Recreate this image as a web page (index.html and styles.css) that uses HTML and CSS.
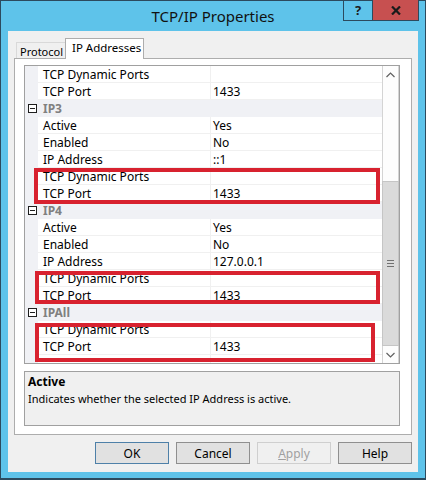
FILE: index.html
```html
<!DOCTYPE html>
<html>
<head>
<meta charset="utf-8">
<link rel="stylesheet" href="styles.css">
</head>
<body>
<div class="window">
  <div class="titlebar"><span class="title">TCP/IP Properties</span></div>
  <div class="caption">
    <div class="cap-help">?</div>
    <div class="cap-close">
      <svg width="10" height="9" viewBox="0 0 10 9"><path d="M1 0.5 L9 8.5 M9 0.5 L1 8.5" stroke="#1b1b1b" stroke-width="2.2" fill="none"/></svg>
    </div>
  </div>
  <div class="client">
    <div class="tabs">
      <div class="tab tab-off">Protocol</div>
      <div class="tab tab-on">IP Addresses</div>
    </div>
    <div class="panel">
      <div class="grid">
        <div class="rows">
          <div class="row"><div class="gut"></div><div class="name">TCP Dynamic Ports</div><div class="val"></div></div>
          <div class="row"><div class="gut"></div><div class="name">TCP Port</div><div class="val">1433</div></div>
          <div class="row cat"><div class="gut"><span class="minus"></span></div><div class="catname">IP3</div></div>
          <div class="row"><div class="gut"></div><div class="name">Active</div><div class="val">Yes</div></div>
          <div class="row"><div class="gut"></div><div class="name">Enabled</div><div class="val">No</div></div>
          <div class="row"><div class="gut"></div><div class="name">IP Address</div><div class="val">::1</div></div>
          <div class="row"><div class="gut"></div><div class="name">TCP Dynamic Ports</div><div class="val"></div></div>
          <div class="row"><div class="gut"></div><div class="name">TCP Port</div><div class="val">1433</div></div>
          <div class="row cat"><div class="gut"><span class="minus"></span></div><div class="catname">IP4</div></div>
          <div class="row"><div class="gut"></div><div class="name">Active</div><div class="val">Yes</div></div>
          <div class="row"><div class="gut"></div><div class="name">Enabled</div><div class="val">No</div></div>
          <div class="row"><div class="gut"></div><div class="name">IP Address</div><div class="val">127.0.0.1</div></div>
          <div class="row"><div class="gut"></div><div class="name">TCP Dynamic Ports</div><div class="val"></div></div>
          <div class="row"><div class="gut"></div><div class="name">TCP Port</div><div class="val">1433</div></div>
          <div class="row cat"><div class="gut"><span class="minus"></span></div><div class="catname">IPAll</div></div>
          <div class="row"><div class="gut"></div><div class="name">TCP Dynamic Ports</div><div class="val"></div></div>
          <div class="row"><div class="gut"></div><div class="name">TCP Port</div><div class="val">1433</div></div>
          <div class="row last"><div class="gut"></div><div class="name blank"></div><div class="val blank"></div></div>
        </div>
        <div class="vscroll">
          <div class="sbtn"><svg width="9" height="6" viewBox="0 0 9 6"><path d="M0.5 5 L4.5 1 L8.5 5" stroke="#606060" stroke-width="1.2" fill="none"/></svg></div>
          <div class="track-top"></div>
          <div class="thumb"><span class="grip"></span></div>
          <div class="sbtn"><svg width="9" height="6" viewBox="0 0 9 6"><path d="M0.5 1 L4.5 5 L8.5 1" stroke="#606060" stroke-width="1.2" fill="none"/></svg></div>
        </div>
      </div>
      <div class="desc">
        <div class="desc-title">Active</div>
        <div class="desc-text">Indicates whether the selected IP Address is active.</div>
      </div>
    </div>
    <div class="buttons">
      <div class="btn btn-default">OK</div>
      <div class="btn">Cancel</div>
      <div class="btn btn-disabled"><u>A</u>pply</div>
      <div class="btn">Help</div>
    </div>
  </div>
  <div class="mark mark1"></div>
  <div class="mark mark2"></div>
  <div class="mark mark3"></div>
</div>
</body>
</html>
```

FILE: styles.css
```css
html, body {
  margin: 0;
  padding: 0;
}
body {
  width: 426px;
  height: 480px;
  overflow: hidden;
  font-family: "Noto Sans", "Open Sans", sans-serif;
  font-size: 12px;
  color: #000;
}
.window {
  position: relative;
  box-sizing: border-box;
  width: 426px;
  height: 480px;
  background: #5ec3ea;
  border: 1px solid #2c4a5e;
  border-bottom-width: 2px;
  padding: 0 7px 6px 7px;
  display: flex;
  flex-direction: column;
}
.titlebar {
  height: 30px;
  display: flex;
  align-items: center;
  justify-content: center;
}
.title {
  font-size: 15px;
  color: #111;
  margin-top: -1px;
}
.caption {
  position: absolute;
  top: -1px;
  right: 6px;
  display: flex;
  border: 1px solid #2c4a5e;
  border-top: none;
}
.cap-help {
  width: 28px;
  height: 20px;
  border-right: 1px solid #2c4a5e;
  display: flex;
  align-items: center;
  justify-content: center;
  font-weight: bold;
  font-size: 13px;
  color: #1b1b1b;
}
.cap-close {
  width: 45px;
  height: 20px;
  background: #c75050;
  display: flex;
  align-items: center;
  justify-content: center;
}
.client {
  flex: 1;
  background: #f0f0f0;
  padding: 7px 6px 0 6px;
  display: flex;
  flex-direction: column;
}
.tabs {
  display: flex;
  align-items: flex-end;
  padding-left: 2px;
  height: 20px;
}
.tab {
  box-sizing: border-box;
  display: flex;
  align-items: center;
  white-space: nowrap;
  font-size: 11.5px;
}
.tab-off {
  height: 16px;
  width: 49px;
  border: 1px solid #d9d9d9;
  border-bottom: none;
  border-right: none;
  background: #f0f0f0;
  padding-left: 3px;
  padding-top: 1px;
  font-size: 11px;
}
.tab-on {
  position: relative;
  z-index: 1;
  height: 21px;
  width: 79px;
  margin-bottom: -1px;
  border: 1px solid #adadad;
  border-bottom: none;
  background: #fff;
  padding-left: 6px;
  padding-bottom: 3px;
}
.panel {
  box-sizing: border-box;
  height: 377px;
  border: 1px solid #adadad;
  background: #fff;
  padding: 6px 0 0 9px;
}
.grid {
  box-sizing: border-box;
  width: 376px;
  height: 299px;
  border: 1px solid #a0a0a0;
  display: flex;
}
.rows {
  flex: 1;
  overflow: hidden;
  display: flex;
  flex-direction: column;
}
.row {
  display: flex;
  height: 17px;
  flex-shrink: 0;
}
.row.last {
  flex: 1;
}
.gut {
  width: 13px;
  background: #f0f1f5;
  flex-shrink: 0;
  position: relative;
}
.name {
  box-sizing: border-box;
  width: 173px;
  border-right: 1px solid #f0f0f0;
  border-bottom: 1px solid #f0f0f0;
  padding-left: 5px;
  padding-top: 1px;
  line-height: 15px;
  white-space: nowrap;
  flex-shrink: 0;
}
.val {
  box-sizing: border-box;
  flex: 1;
  border-bottom: 1px solid #f0f0f0;
  padding-left: 2px;
  padding-top: 1px;
  line-height: 15px;
  white-space: nowrap;
}
.blank {
  border-bottom: none;
}
.cat {
  background: #f0f1f5;
}
.catname {
  padding-left: 5px;
  padding-top: 1px;
  line-height: 16px;
  font-weight: bold;
  color: #808080;
}
.minus {
  position: absolute;
  left: 3px;
  top: 4px;
  box-sizing: border-box;
  width: 9px;
  height: 9px;
  border: 1px solid #1e1e1e;
  background: #fff;
}
.minus::after {
  content: "";
  position: absolute;
  left: 1px;
  top: 3px;
  width: 5px;
  height: 1px;
  background: #1e1e1e;
}
.vscroll {
  width: 17px;
  display: flex;
  flex-direction: column;
  background: #fdfdfd;
  border-left: 1px solid #d4d4d4;
  border-right: 1px solid #d4d4d4;
  box-sizing: border-box;
}
.sbtn {
  height: 17px;
  display: flex;
  align-items: center;
  justify-content: center;
  flex-shrink: 0;
}
.track-top {
  height: 98px;
}
.thumb {
  flex: 1;
  background: #dadada;
  border: 1px solid #c5c5c5;
  margin: 0 -1px;
  display: flex;
  align-items: center;
  justify-content: center;
}
.grip {
  width: 7px;
  height: 5px;
  border-top: 1px solid #707070;
  border-bottom: 1px solid #707070;
  position: relative;
}
.grip::after {
  content: "";
  position: absolute;
  left: 0;
  top: 2px;
  width: 7px;
  height: 1px;
  background: #707070;
}
.desc {
  box-sizing: border-box;
  width: 376px;
  height: 55px;
  margin-top: 7px;
  border: 1px solid #a0a0a0;
  background: #f0f0f0;
  padding: 0 0 0 3px;
}
.desc-title {
  font-weight: bold;
  line-height: 17px;
  margin-top: 1px;
}
.desc-text {
  font-size: 11px;
  line-height: 17px;
}
.buttons {
  display: flex;
  justify-content: flex-end;
  gap: 7px;
  margin-top: 7px;
}
.btn {
  box-sizing: border-box;
  width: 74px;
  height: 22px;
  background: #e1e1e1;
  border: 1px solid #8f8f8f;
  display: flex;
  align-items: center;
  justify-content: center;
}
.btn-default {
  border-color: #4e80a8;
}
.btn-disabled {
  background: #f0f0f0;
  border-color: #cfcfcf;
  color: #a0a0a0;
}
.btn-disabled u {
  text-decoration-thickness: 1px;
}
.mark {
  position: absolute;
  box-sizing: border-box;
  border: 4px solid #d8222f;
}
.mark1 {
  left: 33px;
  top: 167px;
  width: 346px;
  height: 36px;
}
.mark2 {
  left: 34px;
  top: 270px;
  width: 345px;
  height: 33px;
}
.mark3 {
  left: 34px;
  top: 322px;
  width: 340px;
  height: 39px;
}
```
